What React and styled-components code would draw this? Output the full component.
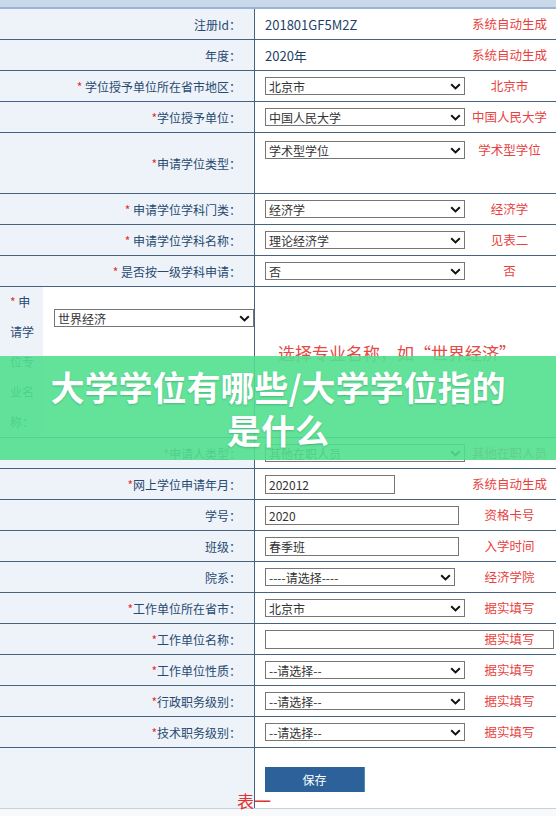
import React from 'react'
import styled, { createGlobalStyle } from 'styled-components'

const GlobalStyle = createGlobalStyle`
  html, body {
    margin: 0;
    padding: 0;
    background: #f7f9fb;
  }
  body {
    font-family: "Noto Sans CJK SC", "Noto Sans", sans-serif;
    width: 556px;
    overflow: hidden;
  }
`

const rows = [
  { label: '注册Id：', text: '201801GF5M2Z', note: '系统自动生成' },
  { label: '年度：', text: '2020年', note: '系统自动生成' },
  { star: '* ', label: '学位授予单位所在省市地区：', select: '北京市', note: '北京市' },
  { star: '*', label: '学位授予单位：', select: '中国人民大学', note: '中国人民大学' },
  { star: '*', label: '申请学位类型：', select: '学术型学位', note: '学术型学位', tall: true },
  { star: '* ', label: '申请学位学科门类：', select: '经济学', note: '经济学' },
  { star: '* ', label: '申请学位学科名称：', select: '理论经济学', note: '见表二' },
  { star: '* ', label: '是否按一级学科申请：', select: '否', note: '否' },
  { special: true },
  { star: '*', label: '申请人类型：', select: '其他在职人员', note: '其他在职人员' },
  { star: '*', label: '网上学位申请年月：', input: '202012', w: 130, note: '系统自动生成' },
  { label: '学号：', input: '2020', w: 194, note: '资格卡号' },
  { label: '班级：', input: '春季班', w: 194, note: '入学时间' },
  { label: '院系：', select: '----请选择----', w: 190, note: '经济学院' },
  { star: '*', label: '工作单位所在省市：', select: '北京市', note: '据实填写' },
  { star: '*', label: '工作单位名称：', input: '', wide: true, note: '据实填写' },
  { star: '*', label: '工作单位性质：', select: '--请选择--', note: '据实填写' },
  { star: '*', label: '行政职务级别：', select: '--请选择--', note: '据实填写' },
  { star: '*', label: '技术职务级别：', select: '--请选择--', note: '据实填写' },
]

function Chevron() {
  return (
    <svg width="11" height="7" viewBox="0 0 11 7">
      <path d="M1.2 1.3 L5.5 5.4 L9.8 1.3" fill="none" stroke="#111" strokeWidth="2" />
    </svg>
  )
}

function Select({ value, w }) {
  return (
    <SelectBox w={w}>
      <span>{value}</span>
      <Chevron />
    </SelectBox>
  )
}

function FormRow({ row }) {
  let control = null
  if (row.text) control = <Plain>{row.text}</Plain>
  else if (row.select) control = <Select value={row.select} w={row.w} />
  else if (row.input !== undefined) control = <InputBox w={row.w} wide={row.wide}>{row.input}</InputBox>

  return (
    <Row h={row.tall ? 60 : 30}>
      <Label>
        {row.star && <Star>{row.star}</Star>}
        {row.label}
      </Label>
      <Value top={row.tall}>
        {control}
        <Note>{row.note}</Note>
      </Value>
    </Row>
  )
}

export default function App() {
  return (
    <Page>
      <GlobalStyle />
      <TopStrip />
      {rows.map((row, i) =>
        row.special ? (
          <Row key={i} h={150}>
            <SplitLabel>
              <NarrowLabel>
                <Star>* </Star>申请学位专业名称：
              </NarrowLabel>
              <SelectArea>
                <Select value="世界经济" w={200} />
              </SelectArea>
            </SplitLabel>
            <HintCell>选择专业名称，如“世界经济”</HintCell>
          </Row>
        ) : (
          <FormRow key={i} row={row} />
        )
      )}
      <Row h={60} last>
        <Label />
        <ButtonCell>
          <SaveButton>保存</SaveButton>
        </ButtonCell>
      </Row>
      <TableCaption>表一</TableCaption>
      <Banner>
        大学学位有哪些/大学学位指的
        <br />
        是什么
      </Banner>
    </Page>
  )
}

const Page = styled.div`
  position: relative;
  width: 556px;
  height: 816px;
  overflow: hidden;
  background: #f7f9fb;
`

const TopStrip = styled.div`
  height: 7px;
  background: #c9d9e9;
  border-bottom: 2px solid #98b4d6;
`

const Row = styled.div`
  display: flex;
  height: ${p => p.h}px;
  border-bottom: 1px solid ${p => (p.last ? '#c8d1db' : '#46627f')};
`

const Label = styled.div`
  width: 255px;
  flex: none;
  box-sizing: border-box;
  border-right: 1px solid #46627f;
  background: #eef3fa;
  display: flex;
  align-items: center;
  justify-content: flex-end;
  padding-right: 13px;
  font-size: 12px;
  color: #284a70;
  white-space: pre;
`

const Star = styled.span`
  color: #e0322f;
  white-space: pre;
`

const Value = styled.div`
  flex: 1;
  display: grid;
  grid-template-columns: 200px 1fr;
  align-items: ${p => (p.top ? 'start' : 'center')};
  padding: ${p => (p.top ? '8px' : '0')} 2px 0 10px;
  background: #fff;
  & > * {
    grid-row: 1;
  }
`

const Plain = styled.div`
  font-size: 13px;
  color: #1e3f66;
`

const SelectBox = styled.div`
  width: ${p => p.w || 200}px;
  height: 18px;
  box-sizing: border-box;
  border: 1px solid #767676;
  background: #fff;
  display: flex;
  align-items: center;
  justify-content: space-between;
  padding: 0 3px 0 3px;
  font-size: 12px;
  color: #333;
  white-space: nowrap;
`

const InputBox = styled.div`
  width: ${p => (p.wide ? 'auto' : `${p.w}px`)};
  grid-column: ${p => (p.wide ? '1 / -1' : '1')};
  height: 19px;
  box-sizing: border-box;
  border: 1px solid #767676;
  background: #fff;
  display: flex;
  align-items: center;
  padding-left: 3px;
  font-size: 12px;
  color: #333;
`

const Note = styled.div`
  grid-column: 2;
  text-align: center;
  font-size: 12.5px;
  color: #e8423f;
  white-space: nowrap;
  line-height: 18px;
`

const SplitLabel = styled.div`
  width: 255px;
  flex: none;
  box-sizing: border-box;
  border-right: 1px solid #46627f;
  display: flex;
  background: #fff;
`

const NarrowLabel = styled.div`
  width: 43px;
  flex: none;
  box-sizing: border-box;
  padding: 0 7px 0 10px;
  background: #eef3fa;
  font-size: 12px;
  line-height: 30px;
  color: #284a70;
`

const SelectArea = styled.div`
  flex: 1;
  padding: 22px 0 0 11px;
`

const HintCell = styled.div`
  flex: 1;
  background: #fff;
  padding: 54px 0 0 23px;
  font-size: 17px;
  line-height: 24px;
  color: #e34a45;
  white-space: nowrap;
`

const ButtonCell = styled.div`
  flex: 1;
  background: #fff;
  padding: 18px 0 0 10px;
`

const SaveButton = styled.button`
  width: 100px;
  height: 25px;
  border: none;
  border-right: 1px solid #4d8bb8;
  background: #2c6299;
  color: #fff;
  font-family: "Noto Sans CJK SC", sans-serif;
  font-size: 12px;
  padding: 0;
`

const TableCaption = styled.div`
  position: absolute;
  left: 237px;
  top: 792px;
  font-size: 17px;
  line-height: 18px;
  color: #e4312f;
`

const Banner = styled.div`
  position: absolute;
  left: 0;
  right: 0;
  top: 356px;
  height: 104px;
  box-sizing: border-box;
  padding-top: 9px;
  background: rgba(82, 223, 143, 0.9);
  color: #fff;
  text-align: center;
  font-size: 34px;
  font-weight: 700;
  line-height: 43px;
  text-shadow: 0 1px 2px rgba(0, 80, 40, 0.25);
`
